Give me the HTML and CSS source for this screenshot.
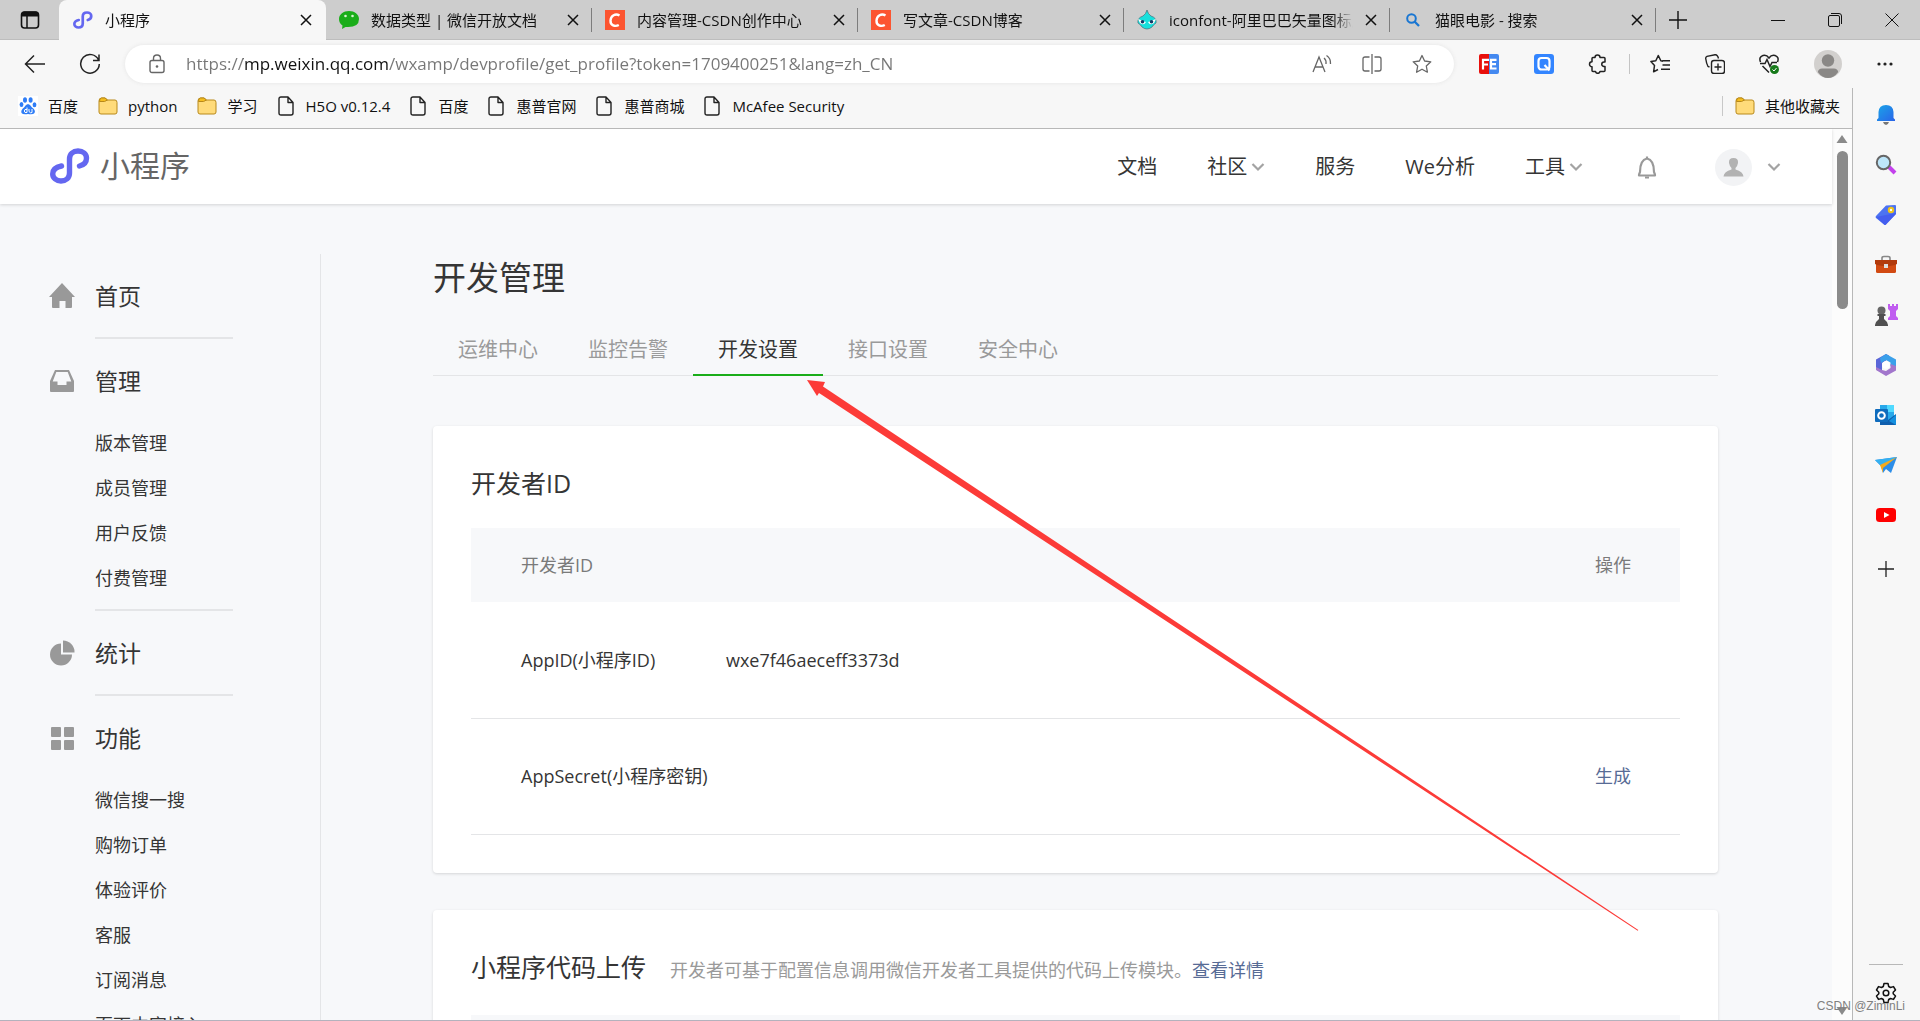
FILE: index.html
```html
<!DOCTYPE html>
<html lang="zh-CN">
<head>
<meta charset="utf-8">
<title>小程序</title>
<link rel="stylesheet" href="styles.css">
</head>
<body>
<svg class="defs" width="0" height="0" aria-hidden="true">
  <defs>
    <symbol id="mini" viewBox="0 0 40 36"><path d="M11.500 18C6.500 19 2.700 21.500 2.700 26C2.700 30 6.500 33 11 33C16 33 19.500 30 19.500 25V11C19.500 6 23 3 28 3C33 3 36.500 6 36.500 10C36.500 14.500 33.500 17 29.500 18" fill="none" stroke="#6467f0" stroke-width="5.400" stroke-linecap="round"/></symbol>
    <symbol id="x" viewBox="0 0 12 12"><path d="M1 1L11 11M11 1L1 11" fill="none" stroke="#111" stroke-width="1.500"/></symbol>
    <symbol id="csdn" viewBox="0 0 20 20"><path fill="#fc5531" d="M0 0h20v20H0z"/><path d="M14.500 5.500C10.500 3 5.800 5.500 5.500 10.500C5.300 15.500 10 17 13.800 15" fill="none" stroke="#fff" stroke-width="2.400"/></symbol>
    <symbol id="folder" viewBox="0 0 20 20"><path d="M1 5Q1 2 3.500 2H7L9.500 4H17Q19 4 19 6.500V16Q19 18 17 18H3Q1 18 1 16Z" fill="#ffdb7a" stroke="#b8891a"/><path d="M1.500 5.500H6.500L9.500 4L7 2H3.500Q1.500 2 1.500 5.500Z" fill="#f5bd1f" stroke="#b8891a"/></symbol>
    <symbol id="file" viewBox="0 0 16 20"><path d="M3 1H10L15 6.500V17Q15 19 13 19H3Q1 19 1 17V3Q1 1 3 1ZM10 1V6.500H15" fill="none" stroke="#222" stroke-width="1.400" stroke-linejoin="round"/></symbol>
    <symbol id="chev" viewBox="0 0 14 10"><path d="M1.500 2L7 7.500L12.500 2" fill="none" stroke="#a3a3a3" stroke-width="2.200"/></symbol>
  </defs>
</svg>

<header class="tabstrip">
  <button class="tab-actions" aria-label="标签操作"><svg width="20" height="20" viewBox="0 0 20 20"><rect x="1.500" y="2" width="17" height="16" rx="3" fill="none" stroke="#111" stroke-width="1.600"/><path d="M1.500 6V4.500Q2 2 4 2H16Q18.500 2 18.500 4.500V6Z" fill="#111" stroke="#111"/><path d="M7 6V18" stroke="#111" stroke-width="1.500"/></svg></button>
  <div class="tab tab-active"><svg width="20" height="20"><use href="#mini"/></svg><span class="tab-title">小程序</span><button class="tab-close" aria-label="关闭"><svg width="12" height="12"><use href="#x"/></svg></button></div>
  <div class="tab"><svg width="20" height="20" viewBox="0 0 20 20"><path d="M10 1C4.500 1 0 4.500 0 9Q0 13 3.500 15.500L3 19L6.500 17Q20 18 20 9C20 4.500 15.500 1 10 1Z" fill="#1aad19"/><circle cx="6.500" cy="6" r="1.300" fill="#d8f5d0"/><circle cx="13.500" cy="6" r="1.300" fill="#d8f5d0"/></svg><span class="tab-title">数据类型 | 微信开放文档</span><button class="tab-close" aria-label="关闭"><svg width="12" height="12"><use href="#x"/></svg></button></div>
  <div class="tab"><svg width="20" height="20"><use href="#csdn"/></svg><span class="tab-title">内容管理-CSDN创作中心</span><button class="tab-close" aria-label="关闭"><svg width="12" height="12"><use href="#x"/></svg></button></div>
  <div class="tab"><svg width="20" height="20"><use href="#csdn"/></svg><span class="tab-title">写文章-CSDN博客</span><button class="tab-close" aria-label="关闭"><svg width="12" height="12"><use href="#x"/></svg></button></div>
  <div class="tab"><svg width="20" height="20" viewBox="0 0 20 20"><path d="M10 0Q11 4 14 6Q20 8 19 13Q16 15 15 17Q10 21 5 17Q4 15 1 13Q0 8 6 6Q9 4 10 0Z" fill="#17e0dc" stroke="#4b6b78" stroke-width=".7"/><path d="M1 9L9 12Q7 16 3 13ZM19 9L11 12Q13 16 17 13Z" fill="#fff"/><circle cx="5.500" cy="11.800" r="1.800" fill="#143a66"/><circle cx="14.500" cy="11.800" r="1.800" fill="#143a66"/></svg><span class="tab-title">iconfont-阿里巴巴矢量图标库</span><button class="tab-close" aria-label="关闭"><svg width="12" height="12"><use href="#x"/></svg></button></div>
  <div class="tab"><svg width="20" height="20" viewBox="0 0 20 20"><circle cx="8.500" cy="8.500" r="4.300" fill="none" stroke="#1976d2" stroke-width="2"/><path d="M11.500 11.500L16 16" stroke="#1976d2" stroke-width="2.300"/></svg><span class="tab-title">猫眼电影 - 搜索</span><button class="tab-close" aria-label="关闭"><svg width="12" height="12"><use href="#x"/></svg></button></div>
  <button class="new-tab" aria-label="新建标签页"><svg width="18" height="18" viewBox="0 0 18 18"><path d="M9 0V18M0 9H18" stroke="#111" stroke-width="1.400"/></svg></button>
  <div class="window-controls">
    <button aria-label="最小化"><svg width="14" height="14" viewBox="0 0 14 14"><path d="M0 7.500H14" stroke="#111"/></svg></button>
    <button aria-label="还原"><svg width="14" height="14" viewBox="0 0 14 14"><rect x=".5" y="2.500" width="11" height="11" rx="1.500" fill="none" stroke="#111"/><path d="M3 .5H11Q13.500 .5 13.500 3V11" fill="none" stroke="#111"/></svg></button>
    <button aria-label="关闭窗口"><svg width="14" height="14" viewBox="0 0 14 14"><path d="M.5 .5L13.500 13.500M13.500 .5L.5 13.500" stroke="#111"/></svg></button>
  </div>
</header>

<nav class="toolbar">
  <button class="tool" aria-label="返回"><svg width="22" height="20" viewBox="0 0 22 20"><path d="M21 10H2M10 1.500L1.500 10L10 18.500" fill="none" stroke="#222" stroke-width="1.500"/></svg></button>
  <button class="tool" aria-label="刷新"><svg width="22" height="22" viewBox="0 0 22 22"><path d="M19.500 7A9.300 9.300 0 1 0 20.300 11M20 1.500V7.500H14" fill="none" stroke="#222" stroke-width="1.500"/></svg></button>
  <div class="address">
    <svg width="16" height="20" viewBox="0 0 16 20"><rect x="1" y="6.500" width="14" height="12" rx="2" fill="none" stroke="#666" stroke-width="1.400"/><path d="M4.500 6.500V4.500Q4.500 1 8 1Q11.500 1 11.500 4.500V6.500" fill="none" stroke="#666" stroke-width="1.400"/><circle cx="8" cy="12.500" r="1.300" fill="#666"/></svg>
    <input class="url" type="text" aria-label="地址栏" value="https://mp.weixin.qq.com/wxamp/devprofile/get_profile?token=1709400251&amp;lang=zh_CN">
    <button class="tool" aria-label="朗读"><svg width="20" height="20" viewBox="0 0 20 20"><path d="M1 18L7 3L13 18M3 13H11M12 4Q14.500 6 14 10M14.500 1.500Q19 4.500 18.500 10" fill="none" stroke="#666" stroke-width="1.300"/></svg></button>
    <button class="tool" aria-label="分屏"><svg width="20" height="20" viewBox="0 0 20 20"><path d="M7.500 3H3Q1 3 1 5V15Q1 17 3 17H7.500M12.500 3H17Q19 3 19 5V15Q19 17 17 17H12.500M10 0V20" fill="none" stroke="#666" stroke-width="1.300"/></svg></button>
    <button class="tool" aria-label="收藏此页"><svg width="20" height="20" viewBox="0 0 20 20"><path d="M10 1.500L12.600 7L18.800 7.800L14.300 12L15.400 18.200L10 15.200L4.600 18.200L5.700 12L1.200 7.800L7.400 7Z" fill="none" stroke="#666" stroke-width="1.300" stroke-linejoin="round"/></svg></button>
  </div>
  <div class="extensions">
    <button class="tool" aria-label="FE"><svg width="20" height="20" viewBox="0 0 20 20"><path d="M2 0H10V20H2Q0 20 0 18V2Q0 0 2 0Z" fill="#e8100c"/><path d="M10 0H18Q20 0 20 2V18Q20 20 18 20H10Z" fill="#4489f0"/><path d="M4 15.500V5.800H10M4 10.500H9M17.500 5.800H12V14.500H17.500M12 10.200H17" fill="none" stroke="#fff" stroke-width="2.200"/></svg></button>
    <button class="tool" aria-label="Q"><svg width="20" height="20" viewBox="0 0 20 20"><rect width="20" height="20" rx="3" fill="#3385ff"/><rect x="4.500" y="4" width="11" height="11.500" rx="3" fill="none" stroke="#fff" stroke-width="2.200"/><path d="M10.500 11L15.500 16.500" stroke="#fff" stroke-width="2.200"/></svg></button>
    <button class="tool" aria-label="扩展"><svg width="20" height="20" viewBox="0 0 20 20"><path d="M7 3.500A2.500 2.500 0 0 1 12 3.500H16Q17 3.500 17 4.500V8H16A2.200 2.200 0 0 0 16 12.500H17V16.500Q17 17.500 16 17.500H12A2.300 2.300 0 0 1 7.500 17.500H5Q4 17.500 4 16.500V12.800A2.500 2.500 0 0 1 4 7.800V4.500Q4 3.500 5 3.500Z" fill="none" stroke="#222" stroke-width="1.500" stroke-linejoin="round"/></svg></button>
    <i class="divider"></i>
    <button class="tool" aria-label="收藏夹"><svg width="20" height="20" viewBox="0 0 20 20"><path d="M13 7.200L10.800 6.800L8.300 1.500L5.800 6.800L.9 7.500L4.500 11.500L3.600 17.800L8 15.500M12.500 6.800H20M12.500 11H20M11 15.200H20" fill="none" stroke="#222" stroke-width="1.500" stroke-linejoin="round"/></svg></button>
    <button class="tool" aria-label="集锦"><svg width="20" height="20" viewBox="0 0 20 20"><rect x="6.500" y="6.500" width="13" height="13" rx="2.500" fill="none" stroke="#222" stroke-width="1.400"/><path d="M13 9.500V16.500M9.500 13H16.500M4.500 13L3 12.500Q1.500 10 .7 4.500Q.6 3 2 2.300L10 .7Q12.500 .5 13.500 4.500" fill="none" stroke="#222" stroke-width="1.400"/></svg></button>
    <button class="tool" aria-label="浏览器健康"><svg width="20" height="20" viewBox="0 0 20 20"><path d="M1.500 8Q-.5 3 4 1.500Q7.500 .5 10 4Q12.500 .5 16 1.500Q20.500 3 18.500 8M1 9.500H6L8 5.500L11 12.500L13 8.500H18M3.500 12L10 18.500" fill="none" stroke="#222" stroke-width="1.500"/><circle cx="15.500" cy="15.500" r="4.500" fill="#177a1a"/><path d="M13.500 15.500L15 17L17.500 14" fill="none" stroke="#fff"/></svg></button>
    <button class="tool" aria-label="用户"><svg width="28" height="28" viewBox="0 0 28 28"><circle cx="14" cy="14" r="14" fill="#d2d0ce"/><circle cx="14" cy="10.500" r="6.200" fill="#8a8886"/><path d="M3.800 22Q4.500 18.500 8 18.500H20Q23.500 18.500 24.200 22Q20 28 14 28Q8 28 3.800 22Z" fill="#8a8886"/></svg></button>
    <button class="tool" aria-label="更多"><svg width="18" height="4" viewBox="0 0 18 4"><circle cx="3" cy="2" r="1.600" fill="#222"/><circle cx="9" cy="2" r="1.600" fill="#222"/><circle cx="15" cy="2" r="1.600" fill="#222"/></svg></button>
  </div>
</nav>

<div class="workspace">
  <div class="column">
    <nav class="bookmarks">
      <a href="#"><svg width="20" height="20" viewBox="0 0 20 20"><path fill="#fff" d="M0 0h20v20H0z"/><g fill="#2f7df6"><ellipse cx="7" cy="4" rx="2" ry="2.800"/><ellipse cx="12.600" cy="4" rx="2" ry="2.800"/><ellipse cx="3.500" cy="8.500" rx="1.900" ry="2.500"/><ellipse cx="16.500" cy="8.800" rx="1.900" ry="2.500"/><path d="M10 8Q12 8 14 11.500Q18 14 16.500 17Q15 19 10 18Q5 19 3.500 17Q2.500 14 6 11.500Q8 8 10 8Z"/></g><path d="M9 11.500V16.500H7Q5.500 15 7 13.500H9M11 13V15.500Q12.500 17.500 14 16.500V13" fill="none" stroke="#fff"/></svg>百度</a>
      <a href="#"><svg width="20" height="20"><use href="#folder"/></svg>python</a>
      <a href="#"><svg width="20" height="20"><use href="#folder"/></svg>学习</a>
      <a class="doc" href="#"><svg width="16" height="20"><use href="#file"/></svg>H5O v0.12.4</a>
      <a class="doc" href="#"><svg width="16" height="20"><use href="#file"/></svg>百度</a>
      <a class="doc" href="#"><svg width="16" height="20"><use href="#file"/></svg>惠普官网</a>
      <a class="doc" href="#"><svg width="16" height="20"><use href="#file"/></svg>惠普商城</a>
      <a class="doc" href="#"><svg width="16" height="20"><use href="#file"/></svg>McAfee Security</a>
      <a class="other" href="#"><svg width="20" height="20"><use href="#folder"/></svg>其他收藏夹</a>
    </nav>

    <div class="viewport">
      <div class="page">
        <header class="site-header">
          <a class="brand" href="#"><svg width="40" height="36"><use href="#mini"/></svg>小程序</a>
          <nav class="site-nav">
            <a href="#">文档</a>
            <a href="#">社区<svg width="14" height="10"><use href="#chev"/></svg></a>
            <a href="#">服务</a>
            <a href="#">We分析</a>
            <a href="#">工具<svg width="14" height="10"><use href="#chev"/></svg></a>
            <button class="notify" aria-label="通知"><svg width="20" height="24" viewBox="0 0 20 24"><path d="M10 1.500V3M2 20.500Q2 19 3 17Q3 5 10 3.500Q17 5 17 17Q18 19 18 20.500Z" fill="none" stroke="#999" stroke-width="2.200" stroke-linejoin="round"/><path d="M8 22.500H12" stroke="#999" stroke-width="2"/></svg></button>
            <button class="account" aria-label="账号"><svg width="37" height="37" viewBox="0 0 37 37"><circle cx="18.500" cy="18.500" r="18.500" fill="#f2f3f5"/><path d="M18.500 9Q23.500 9 23 14Q22.500 17 20.500 19V20.500Q28 22.500 28.500 27.500H8.500Q9 22.500 16.500 20.500V19Q14.500 17 14 14Q13.500 9 18.500 9Z" fill="#b2b2b2"/></svg><svg width="14" height="10"><use href="#chev"/></svg></button>
          </nav>
        </header>

        <div class="body">
          <aside class="menu">
            <section>
              <h2><svg width="26" height="26" viewBox="0 0 26 26"><path d="M13 0L26 14H23V24Q23 25 22 25H16.500V18H10.500V25H4Q3 25 3 24V14H0Z" fill="#999"/></svg><a href="#">首页</a></h2>
            </section>
            <section>
              <h2><svg width="26" height="26" viewBox="0 0 26 26"><path d="M6 2H20L25 13V23Q25 24 24 24H2Q1 24 1 23V13Z" fill="#999"/><path d="M7.300 4H18.700L22.300 13.500H17.500V17H8.500V13.500H3.700Z" fill="#f7f8fa"/></svg><a href="#">管理</a></h2>
              <ul><li><a href="#">版本管理</a></li><li><a href="#">成员管理</a></li><li><a href="#">用户反馈</a></li><li><a href="#">付费管理</a></li></ul>
            </section>
            <section>
              <h2><svg width="26" height="26" viewBox="0 0 26 26"><path d="M12 3.500V14.500H23A11 11 0 1 1 12 3.500Z" fill="#999"/><path d="M14 .5A11.500 11.500 0 0 1 25.500 12.500H14Z" fill="#999"/></svg><a href="#">统计</a></h2>
            </section>
            <section>
              <h2><svg width="26" height="26" viewBox="0 0 26 26" fill="#999"><rect x="2" y="2" width="10" height="10" rx="1"/><rect x="15" y="2" width="10" height="10" rx="1"/><rect x="2" y="15" width="10" height="10" rx="1"/><rect x="15" y="15" width="10" height="10" rx="1"/></svg><a href="#">功能</a></h2>
              <ul><li><a href="#">微信搜一搜</a></li><li><a href="#">购物订单</a></li><li><a href="#">体验评价</a></li><li><a href="#">客服</a></li><li><a href="#">订阅消息</a></li><li><a href="#">页面内容接入</a></li></ul>
            </section>
          </aside>

          <main class="content">
            <h1>开发管理</h1>
            <nav class="section-tabs">
              <a href="#">运维中心</a><a href="#">监控告警</a><a class="current" href="#">开发设置</a><a href="#">接口设置</a><a href="#">安全中心</a>
            </nav>
            <section class="card">
              <h3>开发者ID</h3>
              <table>
                <thead><tr><th>开发者ID</th><th></th><th class="action">操作</th></tr></thead>
                <tbody>
                  <tr><td>AppID(小程序ID)</td><td>wxe7f46aeceff3373d</td><td class="action"></td></tr>
                  <tr><td>AppSecret(小程序密钥)</td><td></td><td class="action"><a href="#">生成</a></td></tr>
                </tbody>
              </table>
            </section>
            <section class="card">
              <h3>小程序代码上传<small>开发者可基于配置信息调用微信开发者工具提供的代码上传模块。<a href="#">查看详情</a></small></h3>
              <table><thead><tr><th></th><th></th><th class="action"></th></tr></thead></table>
            </section>
          </main>
        </div>
      </div>
      <div class="scrollbar" aria-hidden="true">
        <svg width="12" height="10" viewBox="0 0 12 10"><path d="M6 1L11.500 9H.5Z" fill="#8b8b8b"/></svg>
        <i class="thumb"></i>
        <svg width="12" height="10" viewBox="0 0 12 10"><path d="M6 9L11.500 1H.5Z" fill="#8b8b8b"/></svg>
      </div>
    </div>
  </div>

  <aside class="sidebar">
    <button aria-label="通知"><svg width="22" height="22" viewBox="0 0 22 22"><defs><linearGradient id="gb" x1="0" y1="0" x2="1" y2="1"><stop offset="0" stop-color="#1aa5e8"/><stop offset="1" stop-color="#2a63e8"/></linearGradient></defs><path d="M11 1Q18 1 18.500 8V14L20 15.500V17H2V15.500L3.500 14V8Q4 1 11 1Z" fill="url(#gb)"/><path d="M8 18H14Q13 21 11 21Q9 21 8 18Z" fill="#777"/></svg></button>
    <button aria-label="搜索"><svg width="22" height="22" viewBox="0 0 22 22"><path d="M14 13L20 19" stroke="#c341ec" stroke-width="4"/><circle cx="8.500" cy="8.500" r="6.700" fill="#bde6fa" stroke="#666" stroke-width="2"/></svg></button>
    <button aria-label="购物"><svg width="22" height="22" viewBox="0 0 22 22"><path d="M1 12L11 1.500L20 1Q21 1 21 2V10L11 20.500Q10 21.500 9 20.500L1 14Q0 13 1 12Z" fill="#4c73f2"/><path d="M1 13L21 9V10L11 20.500Q10 21.500 9 20.500Z" fill="#3f50ec" opacity=".6"/><circle cx="16" cy="6" r="2.200" fill="#fff" stroke="#f0c419" stroke-width="2"/></svg></button>
    <button aria-label="工具"><svg width="22" height="22" viewBox="0 0 22 22"><path d="M7 6V4Q7 2.500 9 2.500H13Q15 2.500 15 4V6" fill="none" stroke="#888" stroke-width="1.600"/><rect x="1" y="6" width="20" height="13" rx="1.500" fill="#d24a12"/><path d="M0 6H22V10Q18 12 11 12Q4 12 0 10Z" fill="#b23a0c"/><rect x="9" y="10" width="4" height="4" fill="#ddd"/></svg></button>
    <button aria-label="游戏"><svg width="24" height="24" viewBox="0 0 24 24"><path d="M14 1H16V3H18V1H20V3H22V1H24V6L22 8V13L24 15V17H14V15L16 13V8L14 6Z" fill="#c05df0"/><circle cx="7.500" cy="7.500" r="4" fill="#666"/><path d="M3.500 11H11.500V13H10V16Q13 18 14 22V23H1V22Q2 18 5 16V13H3.500Z" fill="#505050"/></svg></button>
    <button aria-label="Microsoft 365"><svg width="22" height="22" viewBox="0 0 22 22"><path d="M11 0L1 5.500V15.500L7 19V9L14 4.500V1.500Z" fill="#5a66d8"/><path d="M11 0L21 5.500V14L15.500 12V8.500L11 6L6 9L5 4Z" fill="#3aa0ea"/><path d="M21 12V16.500L11 22L1 16V13L7 16L11 17L15.500 14V10Z" fill="#a276cc"/><circle cx="11" cy="11" r="3.800" fill="#fff"/></svg></button>
    <button aria-label="Outlook"><svg width="22" height="22" viewBox="0 0 22 22"><path d="M5 1H19V21H5Z" fill="#28a8ea"/><path d="M12 1H19V8H12Z" fill="#50d9ff"/><path d="M5 21V12L13 16L21 10V21Z" fill="#0f5fae"/><path d="M14 17L21 11V21Z" fill="#1490df"/><rect x="0" y="5" width="13" height="13" rx="1" fill="#0f6cbd"/><circle cx="6.500" cy="11.500" r="3.300" fill="none" stroke="#fff" stroke-width="2"/></svg></button>
    <button aria-label="发送"><svg width="22" height="22" viewBox="0 0 22 22"><path d="M0 6L22 3L16 19L11 15L8 19L6 12Z" fill="#2c8de8"/><path d="M0 6L22 3L6 12Z" fill="#35b0f0"/><path d="M5 11L22 3L8 14L8 19Z" fill="#f5aa1c"/></svg></button>
    <button aria-label="YouTube"><svg width="22" height="22" viewBox="0 0 22 22"><rect x="1" y="4" width="20" height="14" rx="3.500" fill="#f00"/><path d="M9 8L14.500 11L9 14Z" fill="#fff"/></svg></button>
    <button class="add" aria-label="添加"><svg width="16" height="16" viewBox="0 0 16 16"><path d="M8 0V16M0 8H16" stroke="#222" stroke-width="1.300"/></svg></button>
    <button class="settings" aria-label="设置"><svg width="22" height="22" viewBox="0 0 22 22"><path d="M9 1.500H13L13.700 4.500L15.500 5.500L18.500 4.600L20.500 8L18.200 10.200V11.800L20.500 14L18.500 17.400L15.500 16.500L13.700 17.500L13 20.500H9L8.300 17.500L6.500 16.500L3.500 17.400L1.500 14L3.800 11.800V10.200L1.500 8L3.500 4.600L6.500 5.500L8.300 4.500Z" fill="none" stroke="#111" stroke-width="1.500" stroke-linejoin="round"/><circle cx="11" cy="11" r="2.800" fill="none" stroke="#111" stroke-width="1.500"/></svg></button>
  </aside>
</div>

<svg class="pointer" width="833" height="552" viewBox="0 0 833 552" aria-hidden="true"><path d="M0 0L18 2L16 6.500L831.300 550L830.700 550.800L12 13L10 16Z" fill="#fc3b38"/></svg>
<span class="watermark">CSDN @ZiminLi</span>
</body>
</html>
```
FILE: styles.css
```css
* { box-sizing: border-box; }

body {
  margin: 0;
  height: 100vh;
  display: flex;
  flex-direction: column;
  overflow: hidden;
  position: relative;
  background: #f7f7f7;
  border-bottom: 1px solid #b3b2bd;
  color: #353535;
  font: 15px/20px "Open Sans", "Noto Sans CJK SC", sans-serif;
}

.defs { position: absolute; }
a { color: inherit; text-decoration: none; }
svg { flex: none; display: block; }
button { border: 0; background: none; padding: 0; margin: 0; font: inherit; color: inherit; display: flex; align-items: center; justify-content: center; }
h1, h2, h3, ul { margin: 0; padding: 0; font-weight: 400; list-style: none; }

/* Tab strip */
.tabstrip { display: flex; align-items: center; height: 40px; background: #cdcdcd; border-bottom: 1px solid #bdbdbd; color: #111; }
.tabstrip, .toolbar, .sidebar { flex: none; }
.tab-actions { width: 59px; }
.tab { flex: 0 1 266px; min-width: 0; height: 24px; display: flex; align-items: center; gap: 12px; padding: 0 12px 0 13px; border-right: 1px solid #7d7d7d; }
.tab-active { flex-basis: 267px; height: 41px; padding: 0 14px 2px; align-self: flex-start; background: #f7f7f7; border-right: 0; border-radius: 8px 8px 0 0; }
.tab-title { flex: 1; overflow: hidden; white-space: nowrap; -webkit-mask-image: linear-gradient(to left, transparent, #000 20px); mask-image: linear-gradient(to left, transparent, #000 20px); }
.tab-close { width: 12px; }
.new-tab { width: 44px; }
.window-controls { display: flex; margin-left: auto; }
.window-controls button { width: 57px; height: 38px; }

/* Toolbar */
.toolbar { display: flex; align-items: center; height: 48px; padding-left: 24px; gap: 33px; }
.address { flex: 1; display: flex; align-items: center; height: 38px; padding: 0 22px 0 24px; margin-left: -9px; border-radius: 19px; background: #fff; box-shadow: 0 0 4px #e4e4e4; }
.address .tool { margin-left: 30px; }
.url {
  flex: 1; min-width: 0; height: 30px; border: 0; padding: 0; margin-left: 21px; outline: 0;
  font: 17px/30px "Open Sans", sans-serif;
  color: transparent;
  background: linear-gradient(to right, #767676 57px, #111 57px, #111 202px, #767676 202px);
  -webkit-background-clip: text; background-clip: text;
}
.extensions { display: flex; align-items: center; justify-content: space-between; width: 441px; padding-right: 26px; margin-left: -8px; }
.divider { width: 1px; height: 20px; margin: 0 -14px; background: #c4c4c4; }

/* Bookmarks and page column */
.workspace { flex: 1; min-height: 0; display: flex; }
.column { flex: 1; min-width: 0; display: flex; flex-direction: column; }
.bookmarks { flex: none; display: flex; align-items: center; height: 41px; padding: 0 12px 5px 18px; gap: 20px; border-bottom: 1px solid #b8b8b8; color: #111; }
.bookmarks a { display: flex; align-items: center; gap: 10px; white-space: nowrap; }
.bookmarks .doc { gap: 12px; }
.bookmarks .other { margin-left: auto; padding-left: 12px; border-left: 1px solid #c8c8c8; }
.viewport { flex: 1; min-height: 0; display: flex; overflow: hidden; background: #f7f8fa; }
.page { flex: 1; min-width: 0; }

.scrollbar { width: 20px; flex: none; display: flex; flex-direction: column; align-items: center; padding: 5px 0 4px; background: #fcfcfc; }
.thumb { width: 11px; height: 158px; margin: 7px 0 auto; border-radius: 6px; background: #8b8b8b; }

/* Edge sidebar */
.sidebar { width: 68px; display: flex; flex-direction: column; align-items: center; border-left: 1px solid #b8b8b8; padding: 2px 2px 16px 0; }
.sidebar button { width: 34px; height: 50px; }
.sidebar .add { height: 58px; }
.sidebar .settings { margin-top: auto; height: 40px; padding-top: 17px; border-top: 1px solid #b8b8b8; }

/* Site header */
.site-header { display: flex; justify-content: space-between; align-items: center; height: 75px; padding: 0 51px 0 50px; background: #fff; box-shadow: 0 1px 3px rgba(0, 0, 0, .15); position: relative; }
.brand { display: flex; align-items: center; gap: 10px; padding-bottom: 2px; color: #666; font-size: 30px; line-height: 36px; }
.site-nav { display: flex; align-items: center; gap: 50px; padding-top: 1px; font-size: 20px; line-height: 28px; }
.site-nav a { display: flex; align-items: center; gap: 4px; }
.notify { margin-left: 4px; }
.account { gap: 15px; margin-left: 8px; }

/* Left menu */
.body { display: flex; align-items: flex-start; padding-top: 50px; }
.menu { flex: none; width: 321px; padding: 0 0 0 49px; border-right: 1px solid #e4e5e7; }
.menu section { margin-right: 87px; }
.menu section + section::before { content: ""; display: block; height: 2px; margin-left: 46px; background: #e4e5e7; }
.menu h2 { display: flex; align-items: center; gap: 20px; height: 83px; font-size: 23px; line-height: 32px; }
.menu ul { margin: -1px 0 0 46px; padding-bottom: 8px; font-size: 18px; line-height: 45px; }

/* Content */
.content { flex: 1; min-width: 0; padding: 0 114px 0 112px; }
h1 { font-size: 33px; line-height: 48px; }
.section-tabs { display: flex; margin-top: 24px; height: 50px; border-bottom: 1px solid #e4e5e7; font-size: 20px; line-height: 47px; color: #9a9a9a; }
.section-tabs a { padding: 0 25px; height: 50px; }
.section-tabs .current { color: #353535; border-bottom: 2px solid #1aad19; }
.card { margin-top: 50px; padding: 37px 38px 38px; background: #fff; border-radius: 4px; box-shadow: 0 1px 3px rgba(0, 0, 0, .14); }
.card + .card { margin-top: 37px; }
h3 { font-size: 25px; line-height: 40px; margin-bottom: 25px; }
small { margin-left: 24px; font-size: 18px; color: #9a9a9a; }
.card a { color: #576b95; }
table { width: 100%; border-collapse: collapse; font-size: 18px; line-height: 26px; text-align: left; }
th { height: 74px; background: #f7f8fa; font-weight: 400; color: #7a7a7a; }
td { height: 116px; border-bottom: 1px solid #e4e5e7; }
th, td { padding: 0; }
th:first-child, td:first-child { width: 255px; padding-left: 50px; white-space: nowrap; }
.action { width: 120px; padding-right: 49px; text-align: right; }

/* Overlays */
.pointer { position: absolute; left: 807px; top: 380px; pointer-events: none; }
.watermark { position: absolute; right: 15px; bottom: 4px; font: 12px/20px "Liberation Sans", sans-serif; color: #808080; }
```
